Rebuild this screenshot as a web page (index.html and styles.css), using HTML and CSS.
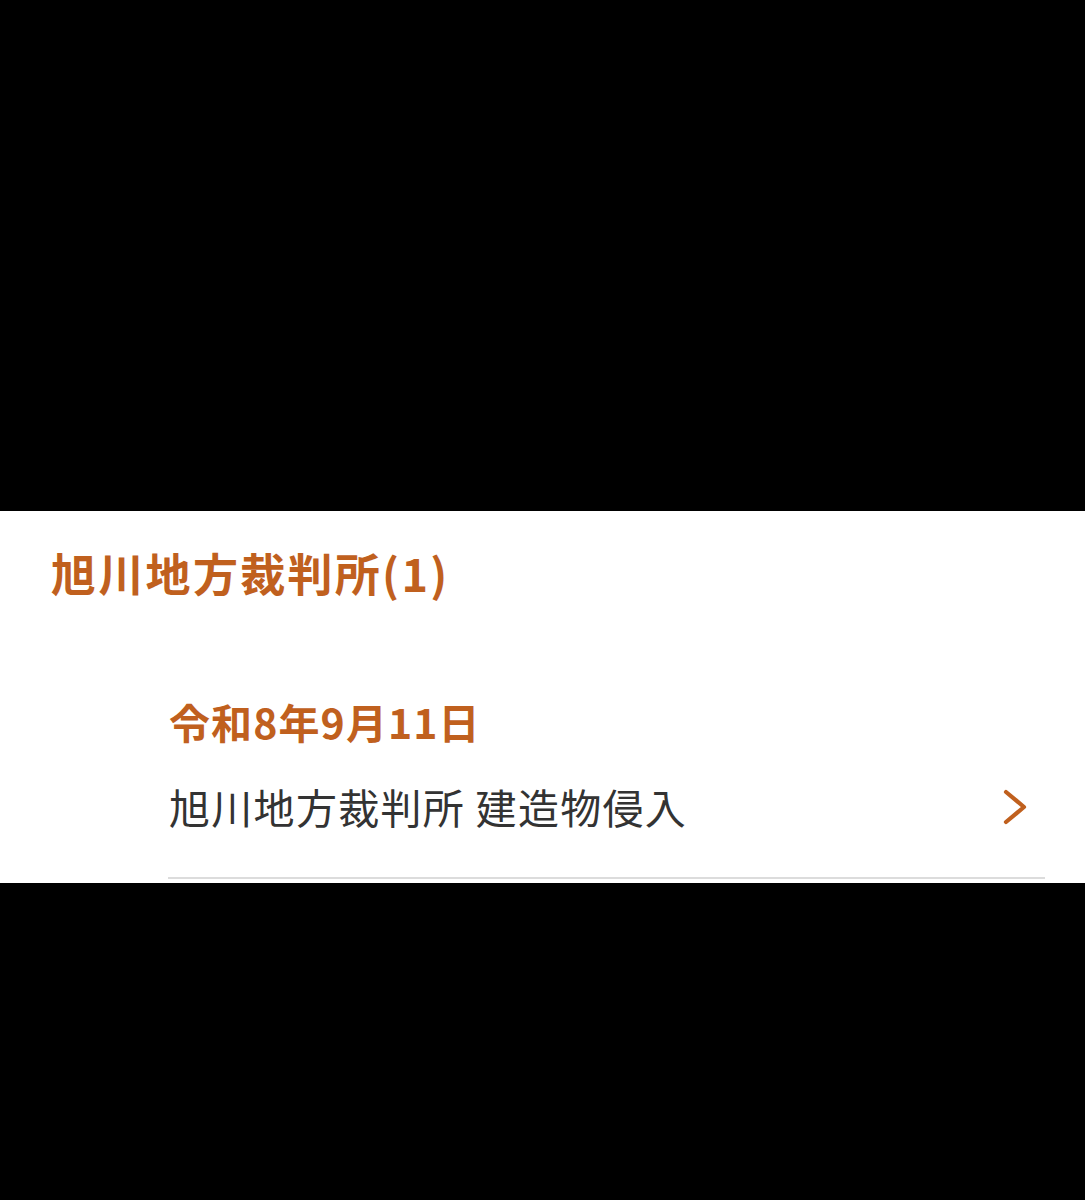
FILE: index.html
```html
<!DOCTYPE html>
<html lang="ja">
<head>
<meta charset="utf-8">
<link rel="stylesheet" href="styles.css">
</head>
<body>
<div class="top-space"></div>
<section class="panel">
  <h2 class="court">旭川地方裁判所(1)</h2>
  <div class="item">
    <div class="date">令和8年9月11日</div>
    <div class="row">
      <span class="title">旭川地方裁判所 建造物侵入</span>
      <svg class="chev" width="26" height="38" viewBox="0 0 26 38" aria-hidden="true">
        <polyline points="4,4 22,19 4,34" fill="none" stroke="#c0601e" stroke-width="4.2" stroke-linecap="round" stroke-linejoin="round"/>
      </svg>
    </div>
  </div>
</section>
</body>
</html>
```
FILE: styles.css
```css
html, body {
  margin: 0;
  padding: 0;
  background: #000;
}
body {
  font-family: "Noto Sans CJK JP", "Noto Sans", sans-serif;
}
.top-space {
  height: 511px;
}
.panel {
  background: #fff;
  height: 372px;
  box-sizing: border-box;
  padding-top: 39px;
}
.court {
  margin: 0 0 0 51px;
  font-size: 45px;
  line-height: 45px;
  font-weight: 700;
  letter-spacing: 2.3px;
  color: #c0601e;
}
.item {
  margin: 106px 40px 0 168px;
  border-bottom: 2px solid #dcdcdc;
  padding-bottom: 50px;
}
.date {
  font-size: 41px;
  line-height: 41px;
  font-weight: 700;
  letter-spacing: 1.1px;
  color: #c0601e;
  padding-left: 1px;
}
.row {
  margin-top: 44px;
  display: flex;
  align-items: center;
  justify-content: space-between;
}
.title {
  font-size: 41px;
  line-height: 41px;
  letter-spacing: 1.3px;
  color: #333;
  padding-left: 1px;
}
.chev {
  margin-right: 17px;
  display: block;
}
```
